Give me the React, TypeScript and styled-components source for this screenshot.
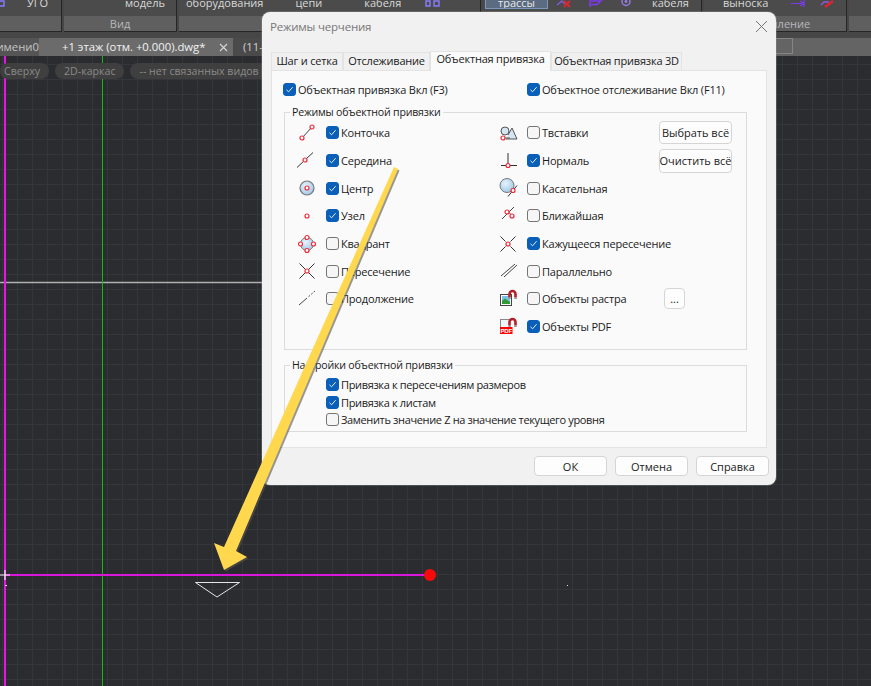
import React from "react";
import styled, { createGlobalStyle } from "styled-components";

const GlobalStyle = createGlobalStyle`
  html, body { margin: 0; padding: 0; background: #2b2c2f; }
  #root { width: 871px; height: 686px; overflow: hidden; }
`;

const Page = styled.div`
  position: relative;
  width: 871px;
  height: 686px;
  overflow: hidden;
  display: flex;
  flex-direction: column;
  font-family: "Open Sans", "Noto Sans", sans-serif;
`;

/* ---------- ribbon ---------- */

const Ribbon = styled.div`
  height: 38px;
  flex: none;
  background: #474747;
  display: flex;
  align-items: flex-start;
  gap: 2px;
`;

const Panel = styled.div<{ $width: number }>`
  width: ${(p) => p.$width}px;
  flex: none;
  height: 32px;
  display: flex;
  flex-direction: column;
  border-right: 1px solid #262626;
  border-bottom: 1px solid #262626;
  box-sizing: border-box;
  &:last-child { border-right: 0; }
`;

const PanelBody = styled.div<{ $pad?: number }>`
  height: 16px;
  background: #4b4b4b;
  display: flex;
  align-items: flex-start;
  overflow: hidden;
  padding-left: ${(p) => p.$pad ?? 0}px;
`;

const PanelLabel = styled.div`
  flex: 1;
  background: #5f5f5f;
  color: #b9b9b9;
  font-size: 11px;
  line-height: 15px;
  text-align: center;
`;

const RibbonText = styled.span<{ $left?: number }>`
  flex: none;
  margin-left: ${(p) => p.$left ?? 0}px;
  margin-top: -5px;
  font-size: 11px;
  line-height: 15px;
  color: #d8d8d8;
  white-space: nowrap;
`;

const ActiveButton = styled.div`
  margin-left: 2px;
  width: 63px;
  height: 9px;
  box-sizing: border-box;
  background: #5b6b80;
  border: 1px solid #7b97bb;
  border-top: 0;
  color: #e8e8e8;
  font-size: 11px;
  line-height: 5px;
  text-align: center;
  overflow: hidden;
  flex: none;
`;

const RibbonIcon = styled.svg<{ $left: number }>`
  flex: none;
  margin-left: ${(p) => p.$left}px;
`;

/* ---------- document tabs ---------- */

const DocTabs = styled.div`
  height: 18px;
  flex: none;
  background: #646464;
  display: flex;
  align-items: stretch;
  font-size: 11.3px;
  line-height: 18px;
  color: #d0d0d0;
`;

const OldTab = styled.div`
  width: 39px;
  background: #555;
  overflow: hidden;
  white-space: nowrap;
  direction: rtl;
  color: #c4c4c4;
`;

const ActiveTab = styled.div`
  width: 194px;
  padding: 0 5px 0 23px;
  box-sizing: border-box;
  background: #6b6b6b;
  color: #f2f2f2;
  display: flex;
  justify-content: space-between;
  align-items: center;
  white-space: nowrap;
`;

const NextTab = styled.div`
  width: 60px;
  padding-left: 10px;
  box-sizing: border-box;
  background: #4a4a4a;
  white-space: nowrap;
`;

const SearchStub = styled.div`
  margin-left: auto;
  margin-right: 78px;
  width: 160px;
  height: 16px;
  border: 1px solid #858585;
  box-sizing: border-box;
`;

/* ---------- canvas ---------- */

const Canvas = styled.div`
  position: relative;
  flex: 1;
  background-color: #2b2c2f;
  background-image:
    linear-gradient(to right, #35363b 1px, transparent 1px),
    linear-gradient(to bottom, #35363b 1px, transparent 1px);
  background-size: 15px 15px;
  background-position: 2px 8px;
`;

const ViewBar = styled.div`
  position: relative;
  z-index: 1;
  display: flex;
  gap: 6px;
  padding-top: 7px;
`;

const ViewPill = styled.span<{ $first?: boolean }>`
  height: 16px;
  padding: 0 9px 0 ${(p) => (p.$first ? 4 : 9)}px;
  border-radius: 8px;
  background: #3f3f3f;
  color: #8a8a8a;
  font-size: 10.6px;
  line-height: 16px;
  white-space: nowrap;
`;

const Drawing = styled.svg`
  position: absolute;
  left: 0;
  top: 0;
  pointer-events: none;
`;

const ArrowLayer = styled.svg`
  position: absolute;
  left: 0;
  top: 0;
  z-index: 5;
  pointer-events: none;
`;

/* ---------- dialog ---------- */

const Dialog = styled.div`
  position: absolute;
  left: 262px;
  top: 12px;
  width: 514px;
  height: 473px;
  border-radius: 8px;
  background: #f1f1f1;
  box-shadow: 0 0 0 1px #9a9a9a55;
  display: flex;
  flex-direction: column;
  color: #1b1b1b;
  font-size: 11px;
  letter-spacing: -0.2px;
  z-index: 3;
`;

const TitleBar = styled.div`
  height: 38px;
  flex: none;
  padding: 7px 8px 0;
  box-sizing: border-box;
  display: flex;
  justify-content: space-between;
  color: #777;
  font-size: 11.5px;
  line-height: 16px;
`;

const TabRow = styled.div`
  display: flex;
  align-items: flex-end;
  height: 20px;
  flex: none;
  margin-left: 9px;
`;

const Tab = styled.div<{ $active?: boolean; $width: number }>`
  width: ${(p) => p.$width}px;
  height: ${(p) => (p.$active ? 20 : 18)}px;
  box-sizing: border-box;
  border: 1px solid #e3e3e3;
  border-bottom: 0;
  background: ${(p) => (p.$active ? "#fafafa" : "#f0f0f0")};
  text-align: center;
  line-height: ${(p) => (p.$active ? 13 : 16)}px;
  white-space: nowrap;
  position: relative;
  margin-bottom: ${(p) => (p.$active ? -1 : 0)}px;
  z-index: ${(p) => (p.$active ? 1 : 0)};
`;

const TabPanel = styled.div`
  margin: 0 9px;
  height: 378px;
  flex: none;
  box-sizing: border-box;
  background: #fafafa;
  border: 1px solid #e3e3e3;
  padding: 0 19px 0 12px;
`;

const TopChecks = styled.div`
  display: grid;
  grid-template-columns: 244px 1fr;
  height: 35px;
  box-sizing: border-box;
  align-items: center;
  padding-top: 2px;
  margin-left: -1px;
`;

const Group = styled.fieldset<{ $height: number }>`
  margin: 0;
  padding: 0;
  height: ${(p) => p.$height}px;
  box-sizing: border-box;
  border: 1px solid #dcdcdc;
  border-radius: 0;
  min-inline-size: auto;
`;

const Legend = styled.legend`
  margin-left: 5px;
  padding: 0 2px;
  font-size: 10.6px;
  line-height: 12px;
`;

const ModesGrid = styled.div`
  display: grid;
  grid-template-columns: 201px 169px 1fr;
  grid-auto-rows: 27.7px;
  align-items: center;
  padding-top: 1px;
`;

const ModeRow = styled.label`
  display: flex;
  align-items: center;
  white-space: nowrap;
`;

const IconBox = styled.span<{ $left: number }>`
  width: 22px;
  height: 22px;
  margin-left: ${(p) => p.$left}px;
  margin-right: 8px;
  flex: none;
  display: flex;
  align-items: center;
  justify-content: center;
`;

const CheckBox = styled.span<{ $on?: boolean }>`
  width: 13px;
  height: 13px;
  flex: none;
  box-sizing: border-box;
  border-radius: 3px;
  background: ${(p) => (p.$on ? "#0a5fb9" : "#f6f6f6")};
  border: 1px solid ${(p) => (p.$on ? "#0a5fb9" : "#757575")};
  display: flex;
  align-items: center;
  justify-content: center;
  margin-right: 2px;
`;

const SideCell = styled.div<{ $inset?: number }>`
  grid-column: 3;
  padding-left: ${(p) => p.$inset ?? 0}px;
  display: flex;
`;

const SmallButton = styled.div<{ $width: number; $height: number }>`
  width: ${(p) => p.$width}px;
  height: ${(p) => p.$height}px;
  box-sizing: border-box;
  border: 1px solid #d5d5d5;
  border-radius: 4px;
  background: #fdfdfd;
  display: flex;
  align-items: center;
  justify-content: center;
  white-space: nowrap;
  letter-spacing: 0;
`;

const SettingsList = styled.div`
  display: flex;
  flex-direction: column;
  padding: 5px 0 0 41px;
`;

const SettingsRow = styled(ModeRow)`
  height: 17.5px;
  letter-spacing: -0.35px;
`;

const GroupGap = styled.div`
  height: 9px;
`;

const Footer = styled.div`
  flex: 1;
  display: flex;
  justify-content: flex-end;
  gap: 8px;
  padding: 8px 7px 0 0;
`;

const FooterButton = styled(SmallButton).attrs({ $width: 73, $height: 20 })``;

/* ---------- icons ---------- */

function Snap({ x, y, r = 2 }: { x: number; y: number; r?: number }) {
  return <circle cx={x} cy={y} r={r} fill="#fff" stroke="#ee2b3a" strokeWidth="1.2" />;
}

function Glyph({ children }: { children: React.ReactNode }) {
  return (
    <svg width="22" height="22" viewBox="0 0 22 22" fill="none">
      {children}
    </svg>
  );
}

function Magnet() {
  return (
    <>
      <path d="M12.5 9.5V6A3 3 0 0 1 18.5 6V9.5" stroke="#b3202a" strokeWidth="2.6" />
      <path d="M11.2 10.3H13.8M17.2 10.3H19.8" stroke="#9a9a9a" strokeWidth="1.6" />
    </>
  );
}

const icons: Record<string, React.ReactNode> = {
  endpoint: (
    <Glyph>
      <path d="M6 16L16 5" stroke="#444" />
      <Snap x={6} y={16} />
      <Snap x={16} y={5} />
    </Glyph>
  ),
  midpoint: (
    <Glyph>
      <path d="M1 17.5L17 2.5" stroke="#333" />
      <Snap x={9} y={10} />
    </Glyph>
  ),
  center: (
    <Glyph>
      <defs>
        <radialGradient id="ball" cx="0.4" cy="0.35" r="0.8">
          <stop offset="0" stopColor="#e8f3fb" />
          <stop offset="1" stopColor="#8fc2e6" />
        </radialGradient>
      </defs>
      <circle cx="11" cy="11" r="7" fill="url(#ball)" stroke="#777" strokeWidth="1.2" />
      <Snap x={11} y={11} />
    </Glyph>
  ),
  node: (
    <Glyph>
      <Snap x={11} y={11} />
    </Glyph>
  ),
  quadrant: (
    <Glyph>
      <circle cx="11" cy="11" r="6.5" fill="url(#ball)" stroke="#777" />
      <Snap x={11} y={4.5} />
      <Snap x={11} y={17.5} />
      <Snap x={4.5} y={11} />
      <Snap x={17.5} y={11} />
    </Glyph>
  ),
  intersection: (
    <Glyph>
      <path d="M3.5 3.5L18.5 18.5M18.5 3.5L3.5 18.5" stroke="#333" />
      <Snap x={11} y={11} />
    </Glyph>
  ),
  extension: (
    <Glyph>
      <path d="M3 17L11 10" stroke="#444" />
      <path d="M12.5 8.7L19 3" stroke="#555" strokeDasharray="2 1.5" />
    </Glyph>
  ),
  insert: (
    <Glyph>
      <path d="M9 17H20L15 6L11 13" fill="#d5e6f3" stroke="#555" />
      <circle cx="8" cy="9" r="4" fill="#d5e6f3" stroke="#555" />
      <path d="M6 16H13" stroke="#555" />
      <Snap x={6} y={16} />
    </Glyph>
  ),
  normal: (
    <Glyph>
      <path d="M11 3V15M4 15.5H20" stroke="#333" />
      <Snap x={11} y={15.5} />
    </Glyph>
  ),
  tangent: (
    <Glyph>
      <circle cx="10" cy="8.5" r="7" fill="url(#ball)" stroke="#777" />
      <path d="M11 19.5L20 8.5" stroke="#333" />
      <Snap x={16} y={13.5} />
    </Glyph>
  ),
  nearest: (
    <Glyph>
      <path d="M5 14L17 2" stroke="#444" />
      <path d="M10 7C12 7 14 9 15 11" stroke="#a33" />
      <Snap x={10} y={7} />
      <Snap x={15} y={11} />
    </Glyph>
  ),
  apparent: (
    <Glyph>
      <path d="M3.5 3.5L8.5 8.5M13.5 13.5L18.5 18.5M18.5 3.5L13.5 8.5M8.5 13.5L3.5 18.5" stroke="#333" />
      <Snap x={11} y={11} />
    </Glyph>
  ),
  parallel: (
    <Glyph>
      <path d="M4 16L18 4M7 17L20 5" stroke="#444" />
    </Glyph>
  ),
  raster: (
    <Glyph>
      <rect x="3.5" y="6.5" width="11" height="11" fill="#fff" stroke="#444" />
      <rect x="5" y="8" width="8" height="8" fill="#7cc0e8" />
      <path d="M5 16V13L8 10.5L13 14V16Z" fill="#2f9a34" />
      <Magnet />
    </Glyph>
  ),
  pdf: (
    <Glyph>
      <rect x="3.5" y="3.5" width="9" height="8" fill="#eef4f8" stroke="#888" />
      <Magnet />
      <rect x="3" y="11" width="12.5" height="7" fill="#f00" />
      <text x="9.2" y="16.8" textAnchor="middle" fontFamily="Liberation Sans, sans-serif" fontSize="6" fontWeight="700" fill="#fff">
        PDF
      </text>
    </Glyph>
  ),
};

const ribbonGlyphs: Record<string, React.ReactNode> = {
  blocks: <path d="M1 1V6H5V1ZM9 1V6H14V1Z" stroke="#8a7bff" strokeWidth="1.4" />,
  hatch: (
    <>
      <path d="M1 5L6 1L9 4" stroke="#7a5bd8" strokeWidth="1.6" />
      <path d="M8 1L14 7M14 1L8 7" stroke="#e0252c" strokeWidth="1.8" />
    </>
  ),
  flag: <path d="M2 7V1H13L9 4.5H2" stroke="#7d3bf0" strokeWidth="1.5" />,
  ring: (
    <>
      <circle cx="8" cy="1.5" r="4" stroke="#9a7be8" strokeWidth="1.4" />
      <circle cx="8" cy="1.5" r="1.4" fill="#9a7be8" />
    </>
  ),
  leader: <path d="M0 3.5H11M9 1L13 3.5L9 6M13 0V7" stroke="#7d3bf0" strokeWidth="1.2" />,
  pen: (
    <>
      <path d="M1 5L4 2H9" stroke="#8a5be0" strokeWidth="1.4" />
      <path d="M5 7L13 1" stroke="#e0252c" strokeWidth="2.4" />
    </>
  ),
};

function RibbonGlyph({ name, left }: { name: string; left: number }) {
  return (
    <RibbonIcon $left={left} width="15" height="8" viewBox="0 0 15 8" fill="none">
      {ribbonGlyphs[name]}
    </RibbonIcon>
  );
}

function Tick() {
  return (
    <svg width="9" height="9" viewBox="0 0 9 9" fill="none">
      <path d="M1.5 4.8L3.6 6.8L7.6 2.2" stroke="#dfeeff" strokeWidth="1" />
    </svg>
  );
}

function Check({ on }: { on?: boolean }) {
  return <CheckBox $on={on}>{on && <Tick />}</CheckBox>;
}

const leftModes = [
  { icon: "endpoint", text: "Конточка", on: true },
  { icon: "midpoint", text: "Середина", on: true },
  { icon: "center", text: "Центр", on: true },
  { icon: "node", text: "Узел", on: true },
  { icon: "quadrant", text: "Квадрант", on: false },
  { icon: "intersection", text: "Пересечение", on: false },
  { icon: "extension", text: "Продолжение", on: false },
  null,
];

const rightModes = [
  { icon: "insert", text: "Твставки", on: false },
  { icon: "normal", text: "Нормаль", on: true },
  { icon: "tangent", text: "Касательная", on: false },
  { icon: "nearest", text: "Ближайшая", on: false },
  { icon: "apparent", text: "Кажущееся пересечение", on: true },
  { icon: "parallel", text: "Параллельно", on: false },
  { icon: "raster", text: "Объекты растра", on: false },
  { icon: "pdf", text: "Объекты PDF", on: true },
];

function SideButton({ row }: { row: number }) {
  if (row === 0) return <SideCell $inset={4}><SmallButton $width={73} $height={23}>Выбрать всё</SmallButton></SideCell>;
  if (row === 1) return <SideCell $inset={4}><SmallButton $width={73} $height={24}>Очистить всё</SmallButton></SideCell>;
  if (row === 6) return <SideCell $inset={9}><SmallButton $width={21} $height={21}>...</SmallButton></SideCell>;
  return <SideCell />;
}

function ModeCell({ mode, inset }: { mode: { icon: string; text: string; on: boolean } | null; inset: number }) {
  if (!mode) return <span />;
  return (
    <ModeRow>
      <IconBox $left={inset}>{icons[mode.icon]}</IconBox>
      <Check on={mode.on} />
      {mode.text}
    </ModeRow>
  );
}

export default function App() {
  return (
    <Page>
      <GlobalStyle />
      <Ribbon>
        <Panel $width={62}>
          <PanelBody>
            <RibbonGlyph name="blocks" left={-10} />
            <RibbonText $left={22}>УГО</RibbonText>
          </PanelBody>
          <PanelLabel />
        </Panel>
        <Panel $width={113}>
          <PanelBody $pad={61}>
            <RibbonText>модель</RibbonText>
          </PanelBody>
          <PanelLabel>Вид</PanelLabel>
        </Panel>
        <Panel $width={302}>
          <PanelBody $pad={7}>
            <RibbonText>оборудования</RibbonText>
            <RibbonText $left={32}>цепи</RibbonText>
            <RibbonText $left={42}>кабеля</RibbonText>
            <RibbonGlyph name="blocks" left={24} />
          </PanelBody>
          <PanelLabel />
        </Panel>
        <Panel $width={219}>
          <PanelBody>
            <ActiveButton>трассы</ActiveButton>
            <RibbonGlyph name="hatch" left={8} />
            <RibbonGlyph name="flag" left={17} />
            <RibbonGlyph name="ring" left={15} />
            <RibbonText $left={19}>кабеля</RibbonText>
          </PanelBody>
          <PanelLabel />
        </Panel>
        <Panel $width={143}>
          <PanelBody $pad={19}>
            <RibbonText>выноска</RibbonText>
            <RibbonGlyph name="leader" left={23} />
            <RibbonGlyph name="pen" left={14} />
          </PanelBody>
          <PanelLabel>Оформление</PanelLabel>
        </Panel>
        <Panel $width={30}>
          <PanelBody />
          <PanelLabel />
        </Panel>
      </Ribbon>

      <DocTabs>
        <OldTab>Без имени0</OldTab>
        <ActiveTab>
          +1 этаж (отм. +0.000).dwg*
          <svg width="9" height="9" viewBox="0 0 9 9" fill="none">
            <path d="M1 1L8 8M8 1L1 8" stroke="#d8d8d8" strokeWidth="1.1" />
          </svg>
        </ActiveTab>
        <NextTab>(11-</NextTab>
        <SearchStub />
      </DocTabs>

      <Canvas>
        <Drawing width="871" height="630" viewBox="0 56 871 630">
          <path d="M0 282.5H262" stroke="#b0b0b0" strokeWidth="1.4" />
          <path d="M5 56V686" stroke="#e815e8" strokeWidth="2" />
          <path d="M102.5 56V686" stroke="#0fbf0f" strokeWidth="1" />
          <path d="M5 575H430" stroke="#d916d9" strokeWidth="2" />
          <path d="M0 575H10M5 570V580" stroke="#f4f4f4" strokeWidth="1.2" />
          <circle cx="430" cy="575" r="6" fill="#f50b0b" />
          <path d="M195.5 582.5H239.5L217 597Z" fill="none" stroke="#e6e6e6" />
          <path d="M5 585.5H7M567 585.5H568" stroke="#e6e6e6" />
        </Drawing>
        <ViewBar>
          <ViewPill $first>Сверху</ViewPill>
          <ViewPill>2D-каркас</ViewPill>
          <ViewPill>-- нет связанных видов</ViewPill>
        </ViewBar>
      </Canvas>

      <Dialog>
        <TitleBar>
          Режимы черчения
          <svg width="14" height="14" viewBox="0 0 14 14" fill="none">
            <path d="M2 2L13 13M13 2L2 13" stroke="#777" />
          </svg>
        </TitleBar>
        <TabRow>
          <Tab $width={72}>Шаг и сетка</Tab>
          <Tab $width={87}>Отслеживание</Tab>
          <Tab $width={121} $active>Объектная привязка</Tab>
          <Tab $width={131}>Объектная привязка 3D</Tab>
        </TabRow>
        <TabPanel>
          <TopChecks>
            <ModeRow>
              <Check on />
              Объектная привязка Вкл (F3)
            </ModeRow>
            <ModeRow>
              <Check on />
              Объектное отслеживание Вкл (F11)
            </ModeRow>
          </TopChecks>
          <Group $height={244}>
            <Legend>Режимы объектной привязки</Legend>
            <ModesGrid>
              {leftModes.map((mode, row) => (
                <React.Fragment key={row}>
                  <ModeCell mode={mode} inset={11} />
                  <ModeCell mode={rightModes[row]} inset={11} />
                  <SideButton row={row} />
                </React.Fragment>
              ))}
            </ModesGrid>
          </Group>
          <GroupGap />
          <Group $height={73}>
            <Legend>Настройки объектной привязки</Legend>
            <SettingsList>
              <SettingsRow>
                <Check on />
                Привязка к пересечениям размеров
              </SettingsRow>
              <SettingsRow>
                <Check on />
                Привязка к листам
              </SettingsRow>
              <SettingsRow>
                <Check />
                Заменить значение Z на значение текущего уровня
              </SettingsRow>
            </SettingsList>
          </Group>
        </TabPanel>
        <Footer>
          <FooterButton>ОК</FooterButton>
          <FooterButton>Отмена</FooterButton>
          <FooterButton>Справка</FooterButton>
        </Footer>
      </Dialog>

      <ArrowLayer width="871" height="686" viewBox="0 0 871 686">
        <path d="M394 167L398 169L236 551L247 557L224 570L214 543L224 547Z" fill="#555" opacity="0.6" transform="translate(1.5 1.5)" />
        <path d="M394 167L398 169L236 551L247 557L224 570L214 543L224 547Z" fill="#ffd84d" />
      </ArrowLayer>
    </Page>
  );
}
